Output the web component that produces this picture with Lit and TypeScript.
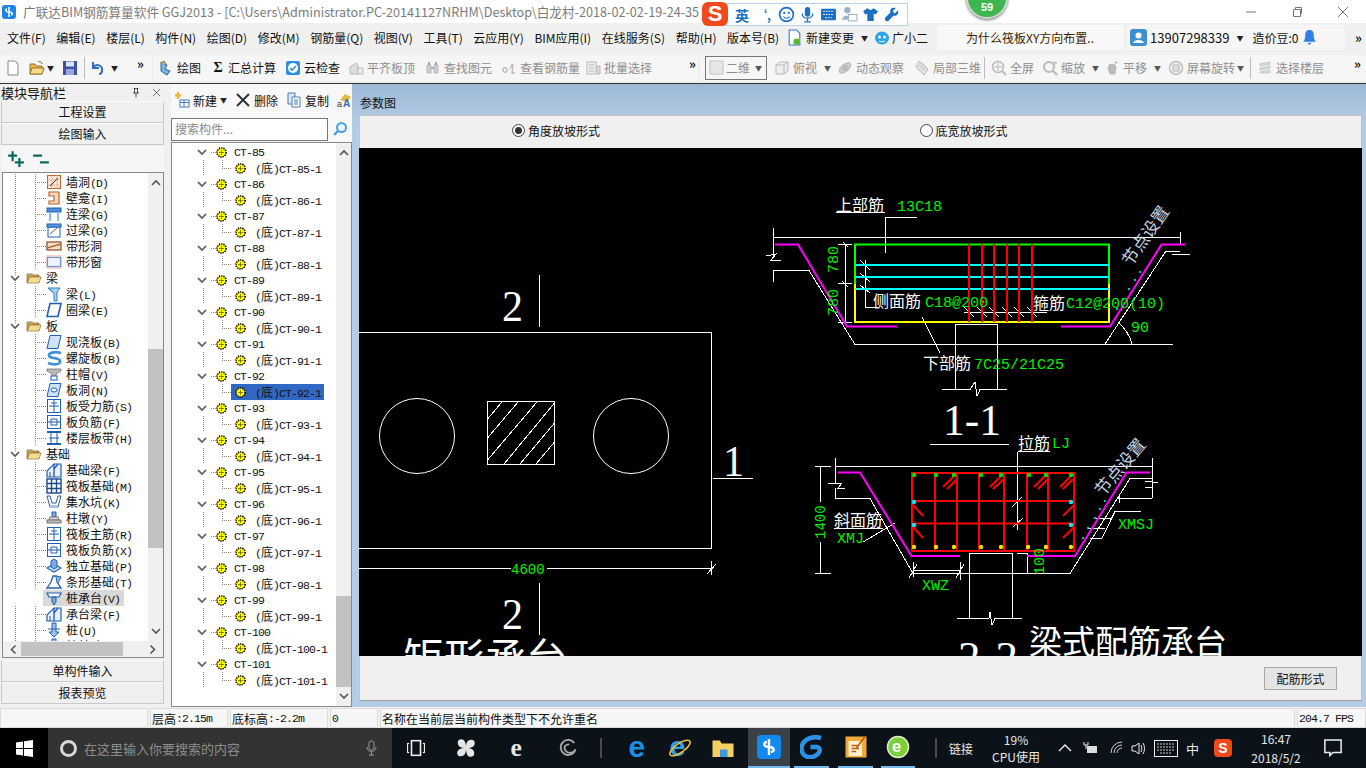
import { LitElement, html, svg, css } from 'lit';
import { customElement } from 'lit/decorators.js';

const i16 = (body: unknown, size = 16) =>
  html`<svg class="ic" width=${size} height=${size} viewBox="0 0 16 16">${body}</svg>`;

const chev = (up = false) =>
  html`<svg class="chev" width="10" height="7" viewBox="0 0 10 7"><path d=${up ? 'M1 6l4-4 4 4' : 'M1 1l4 4 4-4'} fill="none" stroke="#555" stroke-width="1.6"/></svg>`;

const gear = i16(svg`<circle cx="8" cy="8" r="5.6" fill="#ffff00" stroke="#000" stroke-width="2" stroke-dasharray="1.6 1.2"/><path d="M8 5v6M5 8h6" stroke="#6a6a00" stroke-width="1"/>`, 13);

const folder = i16(svg`<path d="M1 4h5l1 1h6v2H4L2 13H1z" fill="#c9a556" stroke="#8a6d3b" stroke-width=".7"/><path d="M3.5 7H15l-2 6H1.5z" fill="#f6dc8e" stroke="#8a6d3b" stroke-width=".7"/>`, 16);

const B = '#1f5fb4';
const L = '#cfe2f8';
const squareCross = (inner: string) => svg`<rect x="1.5" y="1.5" width="13" height="13" fill="#fff" stroke=${B}/><path d=${inner} fill="none" stroke=${B}/>`;

const navIcons: Record<string, unknown> = {
  wall: svg`<rect x="1.5" y="1.5" width="13" height="13" fill="#f8e6da" stroke="#b5652b"/><path d="M1 6h14M1 11h14M6 1v14M11 1v14" stroke="#e0a684" stroke-width=".7"/><path d="M4 12l8-8" stroke="#333"/>`,
  niche: svg`<path d="M3 2h10v12H3v-3h5V6H3z" fill="#f4d8c2" stroke="#b5652b" stroke-width="1.2"/>`,
  lintel: svg`<rect x="1" y="2" width="14" height="4" fill="#4f8fdc" stroke=${B}/><path d="M4 6v9M12 6v9" stroke="#8fb9e8" stroke-width="2"/>`,
  over: svg`<rect x="2" y="5" width="12" height="10" fill="#fff" stroke=${B}/><rect x="1" y="2" width="14" height="3" fill="#5a9ae0" stroke=${B}/><path d="M4 12l7-6" stroke="#555"/>`,
  band: svg`<rect x="1" y="4" width="14" height="8" fill="#f1ddc8" stroke="#8a4b1e" stroke-width="1.2"/><path d="M1 10L15 6" stroke="#a86a38" stroke-width="1.4"/>`,
  win: svg`<rect x="0" y="1" width="16" height="14" fill="#f8d4cc"/><rect x="1.5" y="3.5" width="13" height="9" fill="#eef4fd" stroke="#6f96d8" stroke-width="1.2"/>`,
  beam: svg`<path d="M2 2h12l-3 4v9H8V7z" fill="#a9d2f2" stroke="#2f7fc8"/><path d="M2 2l6 5" stroke="#2f7fc8"/>`,
  ring: svg`<path d="M4 1.5h11L12 14.5H1z" fill="#fff" stroke=${B} stroke-width="1.6"/>`,
  slab: svg`<path d="M4 1.5h11L12 14.5H1z" fill=${L} stroke=${B}/>`,
  spiral: svg`<path d="M15 3C8 1 2 3 3 6s10 1 11 5-7 4-12 2" fill="none" stroke="#3f8fdc" stroke-width="2.6"/>`,
  cap: svg`<path d="M1 3h14v2l-5 3v3H6V8L1 5z" fill="#b8b8b8" stroke="#777" stroke-width=".8"/><rect x="5" y="10" width="6" height="4" fill="#fff" stroke=${B}/>`,
  hole: svg`<path d="M4 1.5h11L12 14.5H1z" fill=${L} stroke=${B}/><ellipse cx="8" cy="8" rx="3" ry="2" fill="#fff" stroke=${B}/>`,
  main: squareCross('M8 2v12M3 8h10M5 5h6'),
  neg: squareCross('M2 8h12M5 5v6M11 5v6M5 5h6M5 11h6'),
  strip: svg`<path d="M1 2h14M1 14h14" stroke=${B} stroke-width="2"/><path d="M5 2v12M11 2v12M3 8h10" stroke=${B}/>`,
  fbeam: svg`<path d="M1 15V9l7-7h7v13z" fill="#e8f1fb" stroke=${B} stroke-width="1.2"/><path d="M8 2v13M12 2L8 7" stroke=${B} stroke-width="1.4"/><path d="M4 15v-5" stroke=${B}/>`,
  raft: svg`<rect x="1" y="1" width="14" height="14" fill="#fff" stroke="#184a8c" stroke-width="1.4"/><path d="M5.5 1v14M10.5 1v14M1 5.5h14M1 10.5h14" stroke="#184a8c" stroke-width="1.4"/>`,
  pit: svg`<path d="M1 2h3l2 7h4l2-7h3l-3 11H4z" fill="#fff" stroke="#2f5d9c"/><path d="M4 11h8l-1 3H5z" fill="#a8c8ea"/>`,
  pier: svg`<path d="M6 2h4v5H6z" fill="#7fa8dc" stroke=${B}/><path d="M4 7h8l1 3H3z" fill="#ddd" stroke="#777"/><rect x="1" y="10" width="14" height="3" fill="#bbb" stroke="#777"/>`,
  iso: svg`<path d="M1 10l7-4 7 4-7 4z" fill=${L} stroke=${B} stroke-width="1.2"/><path d="M5 3l3-2 3 2v6l-3 2-3-2z" fill="#7fa8dc" stroke=${B}/>`,
  trap: svg`<path d="M1 14l4-6 2-6h3l1 6 4 6z" fill="#fff" stroke=${B} stroke-width="1.3"/><path d="M10 2l5 1-3 6" fill="#8fb9e8" stroke=${B}/>`,
  cap2: svg`<path d="M1 3h14l-2 4H3z" fill="#fff" stroke=${B} stroke-width="1.2"/><path d="M6 7h4v5l-2 3-2-3z" fill="#7fa8dc" stroke=${B}/>`,
  pile: svg`<path d="M6 1h4v9h3l-5 5-5-5h3z" fill="#9fc2ea" stroke=${B}/><path d="M2 7h12" stroke=${B}/>`,
};

interface NavRow { t: string; i?: string; f?: boolean; sel?: boolean }
const navRows: NavRow[] = [
  { t: '墙洞(D)', i: 'wall' }, { t: '壁龛(I)', i: 'niche' }, { t: '连梁(G)', i: 'lintel' }, { t: '过梁(G)', i: 'over' },
  { t: '带形洞', i: 'band' }, { t: '带形窗', i: 'win' }, { t: '梁', f: true }, { t: '梁(L)', i: 'beam' }, { t: '圈梁(E)', i: 'ring' },
  { t: '板', f: true }, { t: '现浇板(B)', i: 'slab' }, { t: '螺旋板(B)', i: 'spiral' }, { t: '柱帽(V)', i: 'cap' }, { t: '板洞(N)', i: 'hole' },
  { t: '板受力筋(S)', i: 'main' }, { t: '板负筋(F)', i: 'neg' }, { t: '楼层板带(H)', i: 'strip' }, { t: '基础', f: true },
  { t: '基础梁(F)', i: 'fbeam' }, { t: '筏板基础(M)', i: 'raft' }, { t: '集水坑(K)', i: 'pit' }, { t: '柱墩(Y)', i: 'pier' },
  { t: '筏板主筋(R)', i: 'main' }, { t: '筏板负筋(X)', i: 'neg' }, { t: '独立基础(P)', i: 'iso' }, { t: '条形基础(T)', i: 'trap' },
  { t: '桩承台(V)', i: 'cap2', sel: true }, { t: '承台梁(F)', i: 'fbeam' }, { t: '桩(U)', i: 'pile' }, { t: '桩基础(N)', i: 'pile' },
];

// splits a label so latin runs get the narrow mono font like the bitmap font of the reference
const mixed = (s: string) =>
  s.split(/([\u4e00-\u9fff]+)/).filter(Boolean).map(p =>
    /[\u4e00-\u9fff]/.test(p) ? html`<span class="han">${p}</span>` : html`<span class="lat">${p}</span>`);

const ctRows = Array.from({ length: 17 }, (_, k) => 85 + k);

const menuItems = ['文件(F)', '编辑(E)', '楼层(L)', '构件(N)', '绘图(D)', '修改(M)', '钢筋量(Q)', '视图(V)', '工具(T)', '云应用(Y)', 'BIM应用(I)', '在线服务(S)', '帮助(H)', '版本号(B)'];

const G = '#b9b9b9';
const tb: Record<string, unknown> = {
  draw: svg`<path d="M3 2l6 3-2 4 5 2-3 4-6-4z" fill="#7fb2e8" stroke="#2c5e9e"/><path d="M3 3l3-2 2 3" fill="#f3c64e" stroke="#8a6d3b"/>`,
  cloud: svg`<rect x="1" y="1" width="14" height="14" rx="2" fill="#2f8fe0"/><circle cx="8" cy="8" r="5" fill="#fff"/><path d="M5 8l2 2 4-4" fill="none" stroke="#2f8fe0" stroke-width="1.6"/>`,
  flat: svg`<path d="M2 14V7l6-4 2 3v8z" fill="#ddd" stroke=${G}/><path d="M10 8h5v6h-5z" fill="#eee" stroke=${G}/>`,
  find: svg`<path d="M2 5h4v8H2zM9 5h4v8H9z" fill="#ccc" stroke=${G}/><path d="M3 2h2v3H3zM10 2h2v3h-2zM6 7h3v2H6z" fill="#aaa"/>`,
  bar: svg`<path d="M2 10c0-3 4-3 4 0s-4 3-4 0zM9 9l2-4 1 0-1 8h3" fill="none" stroke=${G} stroke-width="1.3"/>`,
  batch: svg`<rect x="2" y="2" width="9" height="12" fill="#eee" stroke=${G}/><path d="M4 5h5M4 8h5M4 11h5M12 6h3v8h-3z" stroke=${G} fill="#ddd"/>`,
  view: svg`<path d="M2 5l4-3h8v9l-4 3H2z" fill="#eee" stroke=${G}/><path d="M2 5h8v9M10 5l4-3" fill="none" stroke=${G}/>`,
  orbit: svg`<ellipse cx="8" cy="8" rx="7" ry="3.5" transform="rotate(-40 8 8)" fill="#ccc" stroke=${G}/><circle cx="8" cy="8" r="3" fill="#bbb"/>`,
  local: svg`<path d="M5 1l9 8-4 6-8-8z" fill="#e3e3e3" stroke=${G}/><path d="M5 5l6 5M8 3l5 5" stroke=${G}/>`,
  zoom: svg`<circle cx="7" cy="7" r="5.5" fill="#f4f4f4" stroke=${G} stroke-width="1.4"/><path d="M7 3v8M3 7h8" stroke=${G}/><path d="M11 11l4 4" stroke=${G} stroke-width="2"/>`,
  zoom2: svg`<circle cx="7" cy="7" r="5" fill="#f4f4f4" stroke=${G} stroke-width="2"/><path d="M11 11l4 4" stroke=${G} stroke-width="2.4"/><path d="M13 1v4M11 3h4" stroke=${G}/>`,
  pan: svg`<path d="M4 8l2-4 2 1 2-1 2 3-1 7H6z" fill="#bbb" stroke=${G}/><path d="M12 1v3M10.5 2.5h3" stroke=${G}/>`,
  rot: svg`<circle cx="8" cy="8" r="6.5" fill="#f1f1f1" stroke=${G} stroke-width="1.4"/><rect x="5" y="5" width="6" height="6" fill="#ddd" stroke=${G}/>`,
  floor: svg`<path d="M3 4l10-2v2L3 6zM3 8l10-2v2L3 10zM3 12l10-2v3H3z" fill="#ddd" stroke=${G} stroke-width=".7"/>`,
};

const WHITE_LINES = [
  // rectangular cap plan
  'M359 332.5H711.5V548.5H359 M359 568.5H511 M547 568.5H711.5 M711.5 561V575 M707 574L716 564',
  'M539.5 275V327 M539.5 583V635 M713 478.5H753',
  'M487.5 401.5H554.5V464.5H487.5Z M487.5 419L502 402 M487.5 438L518 402 M487.5 460L537 402 M504 464L554.5 403 M520 464L554.5 423 M536 464L554.5 442',
  // section 1-1
  'M836 212.5H885 M885.5 253V217.5H917 M773.5 228V256 M773.5 270V282 M766 256L776 254L771 260H781',
  'M773 237.5H1180 M773 270.5H809L855 344.5H1173 M1105 344L1166 251H1180 M1180 232V244 M1172 254H1190',
  'M845.5 244V322 M838 244.5H852 M838 283.5H852 M838 322.5H852 M843 242L848 247 M842 281L848 287',
  'M865.5 260V307.5H878 M860 260L870 270 M860 273L870 282 M860 285L870 293 M964 312.5H1047',
  'M964 307L974 317 M977 307L987 317 M989 307L999 317 M1002 307L1012 317 M1014 307L1024 317 M1027 307L1037 317',
  'M922 317L940 353 M955.5 389V324.5H997.5V389 M942 389.5H970L975 382L977 396L980 389.5H1007 M1078 323',
  'M1119 323A44 44 0 0 1 1132 344 M930 444.5H1009',
  // section 2-2
  'M835 466.5H1152 M835.5 458V483 M835.5 488V498 M828 483H842L838 488H845 M835 498.5H870L913 573.5H1070L1130 478.5H1152 M1118 498.5H1152',
  'M1152.5 458V498 M1145 481L1158 483 M1145 487H1152 M1119 494V503',
  'M820.5 466V502 M820.5 542V573 M815 466.5H831 M815 573.5H831',
  'M834 528H883 M863 542L895 523 M913 562V577 M960 562V580 M913 570.5H960 M909 578L917 564 M956 578L964 564',
  'M1017.5 452V530 M1017.5 451.5H1050 M1012 507L1022 497 M1013 527L1023 518 M930 444.5H1009',
  'M1115 511.5H1141 M1115 511.5L1102 538H1090 M1096 518.5H1112 M1088 528.5H1105',
  'M969.5 553.5H1012.5V618 M969.5 553V618 M957 618.5H989L990 612 L992 625 L995 618.5H1022',
  'M1017 553.5H1027 M1027 553V573',
].join(' ');

const RED_LINES = 'M969 244V322 M982 244V322 M994 244V322 M1007 244V322 M1019 244V322 M1032 244V322';
const RED_CAGE = [
  'M912 473H1074V551H912Z M935 473V551 M957 473V551 M979 473V551 M1004 473V551 M1027 473V551 M1048 473V551 M912 501H1074 M912 523.5H1074',
  'M943 487L957 473 M947 489L957 479 M990 487L1004 473 M993 489L1004 479 M1034 487L1047 474 M1038 489L1048 479 M1060 487L1073 474 M1063 489L1073 479',
  'M913 505L923 516 M913 527L923 538 M1074 505L1063 516 M1074 527L1063 538',
].join(' ');

const dots = (pts: number[][], fill: string, r = 1.8) =>
  pts.map(([x, y]) => svg`<circle cx=${x} cy=${y} r=${r} fill=${fill}/>`);

@customElement('app-root')
export class AppRoot extends LitElement {
  static styles = css`
    :host {
      display: block;
      font-family: "Noto Sans CJK SC", "Liberation Sans", sans-serif;
      font-size: 12px;
      color: #111;
      height: 768px;
      overflow: hidden;
      position: relative;
      width: 1366px;
    }

    * { box-sizing: border-box; }
    .ic { display: block; flex: none; }
    .chev { display: block; flex: none; }
    .han { font-family: "Noto Sans CJK SC", sans-serif; font-size: 12px; }
    .lat { font-family: "Liberation Mono", monospace; font-size: 11.5px; letter-spacing: -0.9px; }
    .caret { font-size: 7px; color: #222; margin-left: 1px; }

    .title {
      align-items: center;
      background: #fff;
      display: flex;
      height: 23px;
      overflow: hidden;
      white-space: nowrap;
    }
    .logo {
      background: #1a86e8;
      border-radius: 3px;
      color: #fff;
      flex: none;
      height: 14px;
      margin: 0 7px 0 2px;
      width: 14px;
    }
    .title-text { color: #7b7b7b; font-size: 12.65px; flex: 1; overflow: hidden; }
    .winbtns { display: flex; flex: none; }
    .winbtns div { align-items: center; display: flex; height: 23px; justify-content: center; width: 46px; }

    .sogou {
      align-items: center;
      background: #fff;
      border: 1px solid #b8d2ea;
      display: flex;
      gap: 4px;
      height: 23px;
      left: 718px;
      padding-left: 16px;
      position: absolute;
      top: 3px;
      width: 190px;
    }
    .sogou b { color: #1a6fc4; font-size: 14px; margin-right: 2px; }
    .sg-logo {
      align-items: center;
      background: #f0491c;
      border-radius: 6px;
      color: #fff;
      display: flex;
      font-family: "Liberation Sans", sans-serif;
      font-size: 22px;
      font-weight: 700;
      height: 24px;
      justify-content: center;
      left: 702px;
      position: absolute;
      top: 2px;
      width: 26px;
    }
    .ball {
      background: #3fb54f;
      border: 2px solid #cfd8cf;
      border-radius: 50%;
      box-shadow: 0 1px 3px #777;
      color: #fff;
      font-family: "Liberation Sans", sans-serif;
      font-size: 11px;
      font-weight: 700;
      height: 42px;
      left: 966px;
      line-height: 56px;
      position: absolute;
      text-align: center;
      top: -23px;
      width: 42px;
    }

    .menu {
      align-items: center;
      background: #f0f0f0;
      display: flex;
      height: 29px;
      padding-left: 7px;
      white-space: nowrap;
    }
    .menu-main { display: flex; gap: 10.6px; }
    .change { align-items: center; display: flex; gap: 3px; margin-left: 7px; }
    .xiao { align-items: center; display: flex; gap: 2px; margin-left: 6px; }
    .ask {
      align-items: center;
      background: #f8f8f8;
      border-radius: 3px;
      color: #3b2400;
      display: flex;
      height: 25px;
      margin-left: 9px;
      padding-left: 29px;
      width: 187px;
    }
    .acct {
      align-items: center;
      background: #f6f6f6;
      border-radius: 3px;
      display: flex;
      gap: 3px;
      height: 25px;
      margin-left: 3px;
      padding-left: 3px;
      width: 218px;
    }
    .more { font-size: 13px; font-weight: 700; line-height: 10px; }
    .menu > .more { margin-left: 10px; }

    .tools {
      align-items: center;
      background: #f0f0f0;
      border-bottom: 1px solid #333;
      display: flex;
      gap: 2px;
      height: 32px;
      white-space: nowrap;
    }
    .tg {
      align-items: center;
      background: #f6f6f6;
      border-radius: 3px;
      display: flex;
      height: 26px;
    }
    .tg.a { flex: none; padding-left: 5px; width: 152px; }
    .tg.b { flex: none; padding-left: 4px; width: 544px; }
    .tg.c { flex: 1; padding-left: 5px; }
    .tool { align-items: center; display: flex; gap: 3px; }
    .tool.off { color: #8e8e8e; }
    .sep { align-self: stretch; background: #bbb; margin: 2px 6px; width: 1px; }
    .sep.tight { margin-left: 3px; }
    .dim2 {
      align-items: center;
      border: 1px solid #777;
      color: #8e8e8e;
      display: flex;
      gap: 2px;
      height: 24px;
      padding: 0 3px;
      width: 62px;
    }

    .main { display: flex; height: 623px; }

    .nav { background: #f0f0f0; display: flex; flex: none; flex-direction: column; width: 165px; }
    .nav-head { align-items: center; display: flex; flex: none; gap: 9px; height: 17px; padding: 0 3px 0 1px; }
    .nav-head span { flex: 1; font-size: 13px; }
    .nav-btn {
      background: #f0f0f0;
      border: 1px solid #c8c8c8;
      border-top-color: #fafafa;
      flex: none;
      font-size: 12px;
      height: 22px;
      line-height: 20px;
      margin: 0 1px;
      text-align: center;
    }
    .plus { align-items: center; background: #f6f6f6; display: flex; flex: none; gap: 7px; height: 26px; margin: 1px 1px 0; padding-left: 6px; }
    .navbox { border: 1px solid #888; display: flex; flex: none; flex-direction: column; height: 486px; margin: 0 1px 0 2px; }
    .navbody { display: flex; flex: 1; min-height: 0; }
    .navrows { background: #fff; flex: 1; overflow: hidden; padding-top: 1px; }
    .row { align-items: center; display: flex; height: 16px; white-space: nowrap; }
    .nrow {
      background-image:
        repeating-linear-gradient(to bottom, #888 0 1px, transparent 1px 2px),
        repeating-linear-gradient(to bottom, #888 0 1px, transparent 1px 2px),
        repeating-linear-gradient(to right, #888 0 1px, transparent 1px 2px);
      background-position: 12px 0, 32px 0, 32px 8px;
      background-repeat: no-repeat;
      background-size: 1px 100%, 1px 100%, 11px 1px;
      padding-left: 43px;
    }
    .nrow .ic { margin-right: 4px; }
    .nrow > span, .frow > span, .ctc .hl > span { margin-top: -2px; }
    .nrow.sel { background-color: #d9d9d9; background-image: none; margin-left: 40px; padding-left: 3px; width: 81px; }
    .frow {
      background-image:
        repeating-linear-gradient(to bottom, #888 0 1px, transparent 1px 2px);
      background-position: 12px 0;
      background-repeat: no-repeat;
      background-size: 1px 100%;
      padding-left: 7px;
    }
    .frow .chev { background: #fff; margin-right: 6px; }
    .frow .ic { margin-right: 4px; }

    .vbar { align-items: center; background: #f0f0f0; display: flex; flex: none; flex-direction: column; width: 15px; }
    .vbar .chev { margin: 6px 0; }
    .vthumb { background: #c2c2c2; flex: none; width: 100%; }
    .vspace { flex: 1; }
    .hbar { align-items: center; background: #f0f0f0; display: flex; flex: none; height: 16px; padding: 0 5px; }
    .hbar .chev:first-child { transform: rotate(90deg); }
    .hbar .chev:last-child { transform: rotate(-90deg); }
    .hthumb { background: #c2c2c2; height: 14px; margin: 0 8px 0 3px; width: 102px; }
    .hspace { flex: 1; }
    .nav-btn.first { margin-top: 2px; }

    .comp { background: #f0f0f0; display: flex; flex: none; flex-direction: column; padding-left: 6px; width: 187px; }
    .comp-tools { align-items: center; background: #f8f8f8; display: flex; flex: none; gap: 3px; height: 32px; overflow: hidden; padding-left: 3px; white-space: nowrap; }
    .comp-tools .tool + .tool { margin-left: 5px; }
    .search { align-items: center; background: #f8f8f8; display: flex; flex: none; height: 26px; }
    .search-in {
      background: #fff;
      border: 1px solid #777;
      color: #8a8a8a;
      font-size: 12px;
      height: 23px;
      line-height: 19px;
      padding-left: 3px;
      width: 157px;
    }
    .search .ic { margin-left: 4px; }
    .ctbox { background: #fff; border: 1px solid #888; display: flex; flex: 1; min-height: 0; }
    .ctrows { flex: 1; overflow: hidden; padding-top: 1px; }
    .ctp {
      background-image: repeating-linear-gradient(to right, #888 0 1px, transparent 1px 2px);
      background-position: 39px 8px;
      background-repeat: no-repeat;
      background-size: 6px 1px;
      padding-left: 25px;
    }
    .ctp .chev { margin-right: 8px; }
    .ctp .ic { margin-right: 6px; }
    .ctc {
      background-image:
        repeating-linear-gradient(to bottom, #888 0 1px, transparent 1px 2px),
        repeating-linear-gradient(to bottom, #888 0 1px, transparent 1px 2px),
        repeating-linear-gradient(to right, #888 0 1px, transparent 1px 2px);
      background-position: 31px 0, 50px 0, 50px 8px;
      background-repeat: no-repeat;
      background-size: 1px 100%, 1px 9px, 10px 1px;
      padding-left: 62px;
    }
    .ctc .ic { margin-right: 8px; }
    .ctc .hl { align-items: center; display: flex; height: 16px; }
    .ctc.sel .hl { background: #3168c4; margin-left: -3px; padding-left: 3px; width: 93px; }

    .params {
      background: linear-gradient(#9db8d6, #b4cde6 40px);
      display: flex;
      flex: 1;
      flex-direction: column;
      min-width: 0;
      padding: 0 4px 6px 7px;
    }
    .ptitle { align-items: flex-end; display: flex; flex: none; height: 31px; padding: 0 0 4px 1px; }
    .radios { background: #f0f0f0; border: 1px solid #c4c4c4; border-bottom: 0; display: grid; flex: none; grid-template-columns: 1fr 1fr; height: 33px; padding-bottom: 3px; }
    .radio { align-items: center; display: flex; gap: 3px; }
    .radio.r1 { padding-left: 152px; }
    .radio.r2 { padding-left: 59px; }
    .dot { background: #fff; border: 1px solid #444; border-radius: 50%; display: block; height: 13px; position: relative; width: 13px; }
    .dot.on::after { background: #333; border-radius: 50%; content: ""; height: 7px; left: 2px; position: absolute; top: 2px; width: 7px; }
    .cad { background: #000; display: block; flex: none; height: 508px; width: 1003px; }
    .cad text { font-family: "Noto Sans CJK SC", sans-serif; }
    .cad .n { fill: #00f000; font-family: "Liberation Mono", monospace; font-size: 15px; }
    .cad .w { fill: #fff; font-size: 16px; font-weight: 400; }
    .cad .s { fill: #fff; font-family: "Liberation Serif", serif; font-size: 45px; }
    .cad .t { fill: #fff; font-size: 33px; font-weight: 400; }
    .cad .j { fill: #c8d4e0; font-size: 17px; font-weight: 400; }
    .foot { align-items: center; background: #f0f0f0; border: 1px solid #c4c4c4; border-top: 0; border-bottom-color: #a0a0a0; display: flex; flex: 1; justify-content: flex-end; padding-right: 24px; }
    .pbtn { background: #e4e4e4; border: 1px solid #a8a8a8; font-size: 12px; height: 23px; line-height: 21px; text-align: center; width: 73px; }

    .status { background: #f0f0f0; display: flex; gap: 2px; height: 21px; padding-top: 1px; }
    .cell { align-items: center; background: #f6f6f6; border: 1px solid #dcdcdc; display: flex; flex: none; padding-left: 1px; white-space: nowrap; }

    .task { background: #0b1319; color: #e8e8e8; display: flex; height: 40px; }
    .start { align-items: center; background: #000; display: flex; flex: none; justify-content: center; width: 48px; }
    .tsearch { align-items: center; background: #333; color: #8d8d8d; display: flex; flex: none; font-size: 13px; padding-left: 12px; width: 344px; }
    .ring { border: 3px solid #d8d8d8; border-radius: 50%; flex: none; height: 17px; margin-right: 7px; width: 17px; }
    .tsearch .hint { flex: 1; }
    .tsearch .ic { margin-right: 13px; }
    .tk { align-items: center; display: flex; flex: none; height: 40px; justify-content: center; width: 43.5px; }
    .tk.line { border-bottom: 2px solid #76b9ed; }
    .tk.act { background: #3a4248; }
    .thin { background: #454b50; flex: none; height: 20px; margin: 10px 8px; width: 2px; }
    .tray { align-items: center; display: flex; flex: 1; font-size: 12px; }
    .cpu { line-height: 17px; margin-left: 15px; text-align: center; width: 56px; }
    .tray .ti { align-items: center; display: flex; flex: none; justify-content: center; }
    .clock { line-height: 19px; text-align: center; width: 62px; }
  `;

  renderCad() {
    return svg`
      <path d=${WHITE_LINES} fill="none" stroke="#fff" stroke-width="1" shape-rendering="crispEdges"/>
      <circle cx="417" cy="436" r="37.5" fill="none" stroke="#fff"/>
      <circle cx="631" cy="436" r="37.5" fill="none" stroke="#fff"/>
      <text class="s" x="502" y="321" textLength="21" lengthAdjust="spacingAndGlyphs">2</text>
      <text class="s" x="502" y="629" textLength="21" lengthAdjust="spacingAndGlyphs">2</text>
      <text class="s" x="723" y="476" textLength="21" lengthAdjust="spacingAndGlyphs">1</text>
      <text class="n" x="511" y="574" style="font-size:14px">4600</text>
      <text class="t" x="403" y="673" style="font-size:41px">矩形承台</text>

      <path d="M775 244.5H798L847 326.5H897 M1061 326.5H1110L1161.5 244.5H1185" fill="none" stroke="#ff00ff" stroke-width="2"/>
      <path d="M855 284V244.5H1109V284" fill="none" stroke="#00ff00" stroke-width="2"/>
      <path d="M855 284V322H1109V284" fill="none" stroke="#ffff00" stroke-width="2"/>
      <path d="M855 265H1109 M855 277H1109 M855 289H1109" fill="none" stroke="#00ffff" stroke-width="2"/>
      <path d=${RED_LINES} fill="none" stroke="#ff0000" stroke-width="2"/>
      ${dots([[1117, 309], [1123, 299], [1129, 289], [1135, 280], [1140, 272]], '#00ffff', 1)}
      <text class="w" x="836" y="211">上部筋</text>
      <text class="n" x="897" y="211">13C18</text>
      <text class="n" transform="translate(838 273) rotate(-90)">780</text>
      <text class="n" transform="translate(838 316) rotate(-90)">780</text>
      <text class="w" x="873" y="307">侧面筋</text>
      <text class="n" x="925" y="307">C18@200</text>
      <text class="w" x="1033" y="309">箍筋</text>
      <text class="n" x="1066" y="308">C12@200(10)</text>
      <text class="n" x="1131" y="332">90</text>
      <text class="w" x="923" y="369">下部筋</text>
      <text class="n" x="974" y="369">7C25/21C25</text>
      <text class="s" x="943" y="435" textLength="58" lengthAdjust="spacingAndGlyphs">1-1</text>
      <text class="j" transform="translate(1131 267) rotate(-55)">节点设置</text>

      <path d="M838 472.5H860L911.5 556H960 M1027 556H1075L1126.5 472.5H1150" fill="none" stroke="#ff00ff" stroke-width="2"/>
      <path d=${RED_CAGE} fill="none" stroke="#ff0000" stroke-width="2"/>
      ${dots([[914, 475], [936, 475], [954, 475], [981, 475], [1001, 475], [1029, 475], [1046, 475], [1071, 475]], '#00e000', 2.2)}
      ${dots([[914, 502], [914, 525], [1071, 502], [1071, 525]], '#00e8ff', 2.2)}
      ${dots([[914, 547], [936, 547], [954, 547], [981, 547], [1001, 547], [1028, 547], [1046, 547], [1071, 547]], '#ffe000', 2.2)}
      ${dots([[1083, 538], [1088, 528], [1095, 518], [1100, 509], [1105, 501]], '#00ffff', 1)}
      <text class="w" x="1018" y="449">拉筋</text>
      <text class="n" x="1052" y="448">LJ</text>
      <text class="n" transform="translate(825 539) rotate(-90)" style="font-size:14px">1400</text>
      <text class="w" x="834" y="526">斜面筋</text>
      <text class="n" x="837" y="543">XMJ</text>
      <text class="n" x="922" y="590">XWZ</text>
      <text class="n" x="1118" y="529">XMSJ</text>
      <text class="n" transform="translate(1044 575) rotate(-90)">100</text>
      <text class="j" transform="translate(1103 497) rotate(-50)">节点设置</text>
      <text class="s" x="958" y="672" textLength="60" lengthAdjust="spacingAndGlyphs">2-2</text>
      <text class="t" x="1029" y="654">梁式配筋承台</text>
    `;
  }

  renderTask() {
    const win = html`<svg width="17" height="17" viewBox="0 0 17 17"><path d="M0 2.4l7-1V8H0zM8 1.2l9-1.2V8H8zM0 9h7v6.6l-7-1zM8 9h9v8l-9-1.2z" fill="#fff"/></svg>`;
    return html`<div class="task">
      <div class="start">${win}</div>
      <div class="tsearch">
        <span class="ring"></span><span class="hint">在这里输入你要搜索的内容</span>
        ${i16(svg`<rect x="6" y="1" width="5" height="9" rx="2.5" fill="none" stroke="#999"/><path d="M4 7c0 6 9 6 9 0M8.5 12v3M6 15h5" fill="none" stroke="#999"/>`, 16)}
      </div>
      <div class="tk" style="width:48px">${i16(svg`<rect x="4" y="1.5" width="8" height="13" fill="none" stroke="#eee" stroke-width="1.4"/><path d="M2 4H.5v8H2M14 4h1.5v8H14" fill="none" stroke="#eee"/>`, 18)}</div>
      <div class="tk" style="width:52px">${i16(svg`<path d="M8 8C4 8 2 7 2 4s4-3 5-1 1 3 1 5zM8 8c4 0 6 1 6 4s-4 3-5 1-1-3-1-5zM8 8c0-4 1-6 4-6s3 4 1 5-3 1-5 1zM8 8c0 4-1 6-4 6s-3-4-1-5 3-1 5-1z" fill="#e6e6e6"/>`, 22)}</div>
      <div class="tk" style="width:52px">${i16(svg`<text x="3" y="13.5" font-size="17" font-family="Liberation Serif" font-weight="700" fill="#e8e8e8">e</text>`, 24)}</div>
      <div class="tk" style="width:48px">${i16(svg`<path d="M13 4A6 6 0 1 0 14 9C13 12 8 13 6 10S6 5 9 5" fill="none" stroke="#aaa" stroke-width="1.4"/>`, 20)}</div>
      <div class="thin"></div>
      <div class="tk" style="width:52px">${i16(svg`<text x="3" y="14" font-size="20" font-family="Liberation Sans" font-weight="700" fill="#1a8fe8">e</text>`, 24)}</div>
      <div class="tk" style="width:36px">${i16(svg`<text x="1" y="13.5" font-size="19" font-family="Liberation Sans" font-weight="700" fill="#2f9fe8">e</text><ellipse cx="8" cy="8" rx="8" ry="3" transform="rotate(-35 8 8)" fill="none" stroke="#f1c232"/>`, 24)}</div>
      <div class="tk" style="width:50px">${i16(svg`<path d="M1 3h5l1 2h8v9H1z" fill="#f5cf62"/><rect x="6" y="9" width="5" height="5" fill="#3b9ad9"/>`, 24)}</div>
      <div class="tk act line" style="width:42px">
        <svg width="24" height="24" viewBox="0 0 24 24"><rect width="24" height="24" rx="4" fill="#1189ee"/><path d="M12 4v16M12 12c-6 0-6-5-2-5M12 12c6 0 6 5 2 5" fill="none" stroke="#fff" stroke-width="2.4"/></svg>
      </div>
      <div class="tk line" style="width:35px;margin-left:4px">${i16(svg`<path d="M14 2C7 0 1 4 1 9s5 7 9 5 4-6 1-6H7" fill="none" stroke="#2c8fe8" stroke-width="3"/>`, 24)}</div>
      <div class="tk line" style="width:35px;margin-left:9px">${i16(svg`<rect x="1" y="1" width="14" height="14" fill="#f2a93b"/><rect x="3" y="4" width="9" height="10" fill="#fbf1cf"/><path d="M5 7h5M5 9h5M5 11h3M14 1L8 9" stroke="#c05a10"/>`, 24)}</div>
      <div class="tk line" style="width:34px;margin-left:8px">${i16(svg`<circle cx="8" cy="8" r="7" fill="#7ccf38" stroke="#dff0c8"/><text x="4" y="11.5" font-size="11" font-family="Liberation Sans" font-weight="700" fill="#fff">e</text>`, 24)}</div>
      <div class="tray">
        <div class="thin" style="margin:0 0 0 20px"></div>
        <span style="margin-left:12px">链接</span>
        <div class="cpu">19%<br/>CPU使用</div>
        <div class="ti" style="width:16px;margin-left:13px">${i16(svg`<path d="M2 11l6-6 6 6" fill="none" stroke="#eee" stroke-width="1.4"/>`)}</div>
        <div class="ti" style="width:26px;margin-left:4px">${i16(svg`<rect x="5" y="6" width="10" height="7" fill="#ddd"/><path d="M2 2v3h4V2M4 5v4" stroke="#eee" fill="none"/>`)}</div>
        <div class="ti" style="width:24px;margin-left:2px">${i16(svg`<path d="M2 13a11 11 0 0 1 11-11M5 13a8 8 0 0 1 8-8M8 13a5 5 0 0 1 5-5" fill="none" stroke="#ccc"/>`)}</div>
        <div class="ti" style="width:18px">${i16(svg`<path d="M2 6h3l4-3v11l-4-3H2zM11 5c1 2 1 5 0 7M13 3c2 3 2 8 0 11" fill="none" stroke="#eee"/>`)}</div>
        <div class="ti" style="width:30px;margin-left:4px"><svg width="24" height="17" viewBox="0 0 24 17"><rect x=".5" y=".5" width="23" height="16" fill="none" stroke="#eee"/><path d="M3 4h18M3 7h18M3 10h18M6 13h12" stroke="#ccc" stroke-dasharray="2 1"/></svg></div>
        <span style="margin-left:5px;font-size:13px">中</span>
        <div class="ti" style="width:18px;margin-left:15px;height:18px;background:#f0491c;border-radius:4px;color:#fff;font:700 14px 'Liberation Sans'">S</div>
        <div class="clock" style="margin-left:13px;margin-right:16px">16:47<br/>2018/5/2</div>
        ${i16(svg`<path d="M1.5 1.5h13v10H8L5.5 14v-2.5h-4z" fill="none" stroke="#eee" stroke-width="1.2"/>`, 20)}
      </div>
    </div>`;
  }

  render() {
    const tool = (icon: unknown, label: string, off = true, gap = 0) =>
      html`<div class="tool ${off ? 'off' : ''}" style=${gap ? `margin-left:${gap}px` : ''}>${i16(icon)}<span>${label}</span></div>`;
    const caret = (gap = 5, color = '#555') => html`<span class="caret" style="margin-left:${gap}px;color:${color}">▼</span>`;
    return html`
      <div class="title">
        <svg class="logo" viewBox="0 0 14 14"><path d="M7 2v10M7 7C3 7 3 4 5 4M7 7c4 0 4 3 2 3" fill="none" stroke="#fff" stroke-width="1.5"/></svg>
        <div class="title-text">广联达BIM钢筋算量软件 GGJ2013 - [C:\\Users\\Administrator.PC-20141127NRHM\\Desktop\\白龙村-2018-02-02-19-24-35</div>
        <div class="winbtns">
          <div>${i16(svg`<path d="M3 8h10" stroke="#777"/>`)}</div>
          <div>${i16(svg`<path d="M4.5 5.5h7v7h-7zM6.5 5V3.5h6v6H12" fill="none" stroke="#777"/>`)}</div>
          <div>${i16(svg`<path d="M3 3l10 10M13 3L3 13" stroke="#777"/>`)}</div>
        </div>
      </div>

      <div class="menu">
        <div class="menu-main">${menuItems.map(m => html`<span>${m}</span>`)}</div>
        <div class="change">
          ${i16(svg`<path d="M3 1h7l3 3v11H3z" fill="#fff" stroke="#2f7fc8"/><circle cx="10" cy="12" r="3" fill="#5bb53a"/>`, 17)}
          <span>新建变更</span>${caret(4, '#222')}
        </div>
        <div class="xiao">
          ${i16(svg`<ellipse cx="8" cy="8" rx="7" ry="6.5" fill="#2aa4ea"/><circle cx="5.5" cy="7" r="1.5" fill="#fff"/><circle cx="10.5" cy="7" r="1.5" fill="#fff"/><path d="M5 11c2 1 4 1 6 0" stroke="#fff" fill="none"/>`, 16)}
          <span>广小二</span>
        </div>
        <div class="ask">为什么筏板XY方向布置..</div>
        <div class="acct">
          <svg width="17" height="17" viewBox="0 0 17 17"><rect width="17" height="17" rx="3" fill="#3e8fd2"/><circle cx="8.5" cy="6.5" r="3" fill="#fff"/><path d="M3 14c1-4 10-4 11 0z" fill="#fff"/></svg>
          <span style="font-size:13px">13907298339</span>${caret(4, '#222')}
          <span style="margin-left:6px">造价豆:0</span>
          ${i16(svg`<path d="M8 1c3 0 4 2 4 5s1 5 2 6H2c1-1 2-3 2-6s1-5 4-5z" fill="#2f80e8"/><path d="M6 13h4l-2 2z" fill="#2f80e8"/>`, 17)}
        </div>
        <span class="more">»</span>
      </div>

      <div class="tools">
        <div class="tg a">
          ${i16(svg`<path d="M3 1h7l3 3v11H3z" fill="#fff" stroke="#888"/>`)}
          <div style="margin-left:8px">${i16(svg`<path d="M1 4h5l1 2h6v8H1z" fill="#e8b64c" stroke="#9a7427"/><path d="M3 8h12l-2 6H1z" fill="#f7dc8c" stroke="#9a7427"/><path d="M9 2c2-1 4 0 4 2" stroke="#3a8a3a" fill="none"/>`)}</div>
          ${caret(2, '#222')}
          <div style="margin-left:8px">${i16(svg`<rect x="1" y="1" width="14" height="14" fill="#3d4fa8"/><rect x="4" y="1.5" width="8" height="5" fill="#dfe4f4"/><rect x="4" y="9" width="8" height="6" fill="#9aa6d8"/>`)}</div>
          <div class="sep" style="margin-right:5px"></div>
          ${i16(svg`<path d="M3 2v6h6M3 8c3-5 10-3 9 3-.3 2-2 3-3 3" fill="none" stroke="#2f6fc0" stroke-width="2"/>`)}
          ${caret(5, '#222')}
          <span class="more" style="margin-left:19px;margin-bottom:8px">»</span>
        </div>
        <div class="tg b">
          ${tool(tb.draw, '绘图', false)}
          <div class="tool" style="margin-left:10px"><b style="font-size:14px;width:14px;text-align:center;font-family:'Liberation Serif'">Σ</b><span>汇总计算</span></div>
          ${tool(tb.cloud, '云检查', false, 9)}
          ${tool(tb.flat, '平齐板顶', true, 8)}
          ${tool(tb.find, '查找图元', true, 10)}
          ${tool(tb.bar, '查看钢筋量', true, 9)}
          ${tool(tb.batch, '批量选择', true, 5)}
          <span class="more" style="margin-left:auto;margin-right:2px;margin-bottom:8px">»</span>
        </div>
        <div class="tg c">
          <div class="dim2"><svg width="15" height="15" viewBox="0 0 16 16"><rect x="1" y="1" width="14" height="14" fill="#e6e6e6" stroke="#c4c4c4"/></svg><span>二维</span>${caret(3)}</div>
          ${tool(tb.view, '俯视', true, 7)}
          ${caret(7)}
          ${tool(tb.orbit, '动态观察', true, 6)}
          ${tool(tb.local, '局部三维', true, 10)}
          <div class="sep tight"></div>
          ${tool(tb.zoom, '全屏')}
          ${tool(tb.zoom2, '缩放', true, 8)}
          ${caret(7)}
          ${tool(tb.pan, '平移', true, 5)}
          ${caret(7)}
          ${tool(tb.rot, '屏幕旋转', true, 7)}
          ${caret(2)}
          <div class="sep"></div>
          ${tool(tb.floor, '选择楼层')}
          <span class="more" style="margin-left:auto;margin-right:5px;margin-bottom:8px">»</span>
        </div>
      </div>

      <div class="main">
        <div class="nav">
          <div class="nav-head">
            <span>模块导航栏</span>
            ${i16(svg`<path d="M5 2h6M6 2v6M10 2v6M4 8h8M8 8v6" stroke="#222"/>`, 12)}
            ${i16(svg`<path d="M3 3l10 10M13 3L3 13" stroke="#333"/>`, 11)}
          </div>
          <div class="nav-btn">工程设置</div>
          <div class="nav-btn">绘图输入</div>
          <div class="plus">
            ${i16(svg`<path d="M5 1v9M1 5h8M11 7v8M7 11h8" stroke="#0c6b5e" stroke-width="2"/>`, 18)}
            ${i16(svg`<path d="M1 5h8M7 11h8" stroke="#0c6b5e" stroke-width="2"/>`, 18)}
          </div>
          <div class="navbox">
            <div class="navbody">
              <div class="navrows">
                ${navRows.map(r => r.f
                  ? html`<div class="row frow">${chev()}${folder}<span>${r.t}</span></div>`
                  : html`<div class="row nrow ${r.sel ? 'sel' : ''}">${i16(navIcons[r.i as string])}<span>${mixed(r.t)}</span></div>`)}
              </div>
              <div class="vbar">
                ${chev(true)}
                <div class="vspace" style="flex:0 0 157px"></div>
                <div class="vthumb" style="height:199px"></div>
                <div class="vspace"></div>
                ${chev()}
              </div>
            </div>
            <div class="hbar">${chev()}<div class="hthumb"></div><div class="hspace"></div>${chev()}</div>
          </div>
          <div class="nav-btn first">单构件输入</div>
          <div class="nav-btn">报表预览</div>
        </div>

        <div class="comp">
          <div class="comp-tools">
            <div class="tool">
              ${i16(svg`<path d="M4 0v7M1 3.5h6" stroke="#e2b93b" stroke-width="2.4"/><rect x="6" y="8" width="9" height="7" fill="#fff" stroke="#4a7ab8"/><path d="M6 10.5h9M10 8v7" stroke="#4a7ab8"/>`)}
              <span>新建</span><span class="caret" style="margin-left:0">▼</span>
            </div>
            <div class="tool">${i16(svg`<path d="M2 2l12 12M14 2L2 14" stroke="#333" stroke-width="2"/>`)}<span>删除</span></div>
            <div class="tool">${i16(svg`<path d="M2 1h7v11H2z" fill="#dbe8f7" stroke="#4a7ab8"/><path d="M6 5h8v10H6z" fill="#fff" stroke="#4a7ab8"/><path d="M8 8h4M8 10h4M8 12h4" stroke="#4a7ab8"/>`)}<span>复制</span></div>
            <div style="margin-left:4px">${i16(svg`<path d="M4 8l5-6 6 3-4 5z" fill="#e2b93b"/><text x="1" y="15" font-size="9" font-family="Liberation Sans" fill="#333">a</text><text x="7" y="15" font-size="10" font-family="Liberation Sans" font-weight="700" fill="#2f6fc0">A</text>`)}</div>
          </div>
          <div class="search">
            <div class="search-in">搜索构件...</div>
            ${i16(svg`<circle cx="9.5" cy="6.5" r="4.5" fill="#eaf4fd" stroke="#4aa0e6" stroke-width="2"/><path d="M6 10l-4 4" stroke="#4aa0e6" stroke-width="2.4"/>`)}
          </div>
          <div class="ctbox">
            <div class="ctrows">
              ${ctRows.map(n => html`
                <div class="row ctp">${chev()}${gear}<span class="lat">CT-${n}</span></div>
                <div class="row ctc ${n === 92 ? 'sel' : ''}"><div class="hl">${gear}<span>${mixed(`(底)CT-${n}-1`)}</span></div></div>
              `)}
            </div>
            <div class="vbar">
              ${chev(true)}
              <div class="vspace"></div>
              <div class="vthumb" style="height:91px"></div>
              ${chev()}
            </div>
          </div>
        </div>

        <div class="params">
          <div class="ptitle">参数图</div>
          <div class="radios">
            <label class="radio r1"><span class="dot on"></span>角度放坡形式</label>
            <label class="radio r2"><span class="dot"></span>底宽放坡形式</label>
          </div>
          <svg class="cad" viewBox="359 148 1003 508">${this.renderCad()}</svg>
          <div class="foot"><div class="pbtn">配筋形式</div></div>
        </div>
      </div>

      <div class="status">
        <div class="cell" style="width:148px"></div>
        <div class="cell" style="width:78px">${mixed('层高:2.15m')}</div>
        <div class="cell" style="width:98px">${mixed('底标高:-2.2m')}</div>
        <div class="cell" style="width:48px">${mixed('0')}</div>
        <div class="cell" style="width:915px">名称在当前层当前构件类型下不允许重名</div>
        <div class="cell" style="flex:1">${mixed('204.7 FPS')}</div>
      </div>

      ${this.renderTask()}

      <div class="sogou">
        <b>英</b>
        <span style="color:#1a6fc4;margin-right:3px;font-weight:700">‘,</span>
        ${i16(svg`<circle cx="8" cy="8" r="6.5" fill="#fff" stroke="#1a6fc4" stroke-width="1.6"/><circle cx="5.8" cy="6.5" r="1" fill="#1a6fc4"/><circle cx="10.2" cy="6.5" r="1" fill="#1a6fc4"/><path d="M5 10c2 2 4 2 6 0" stroke="#1a6fc4" fill="none"/>`, 17)}
        ${i16(svg`<rect x="5.5" y="1" width="5" height="9" rx="2.5" fill="#1a6fc4"/><path d="M3 7c0 6 10 6 10 0M8 12v3M5 15h6" fill="none" stroke="#1a6fc4" stroke-width="1.2"/>`, 17)}
        ${i16(svg`<rect x="1" y="2.5" width="14" height="11" rx="1" fill="#1a6fc4"/><path d="M3 5h10M3 8h10M5 11h6" stroke="#fff" stroke-dasharray="1.5 1"/>`, 17)}
        ${i16(svg`<circle cx="6" cy="4" r="3" fill="#9fb2c4"/><path d="M1 13c0-5 9-5 9 0z" fill="#9fb2c4"/><rect x="7" y="8" width="8" height="6" fill="#fff" stroke="#9fb2c4"/>`, 17)}
        ${i16(svg`<path d="M5 2L1 5l2 3 2-1v7h6V7l2 1 2-3-4-3-3 2z" fill="#1a6fc4"/>`, 17)}
        ${i16(svg`<path d="M14 4l-3 3-2-2 3-3c-3-1-6 1-5 4L2 11c-1 2 1 4 3 3l5-5c3 1 5-2 4-5z" fill="#1a6fc4"/>`, 17)}
      </div>
      <div class="sg-logo">S</div>
      <div class="ball">59</div>
    `;
  }
}
